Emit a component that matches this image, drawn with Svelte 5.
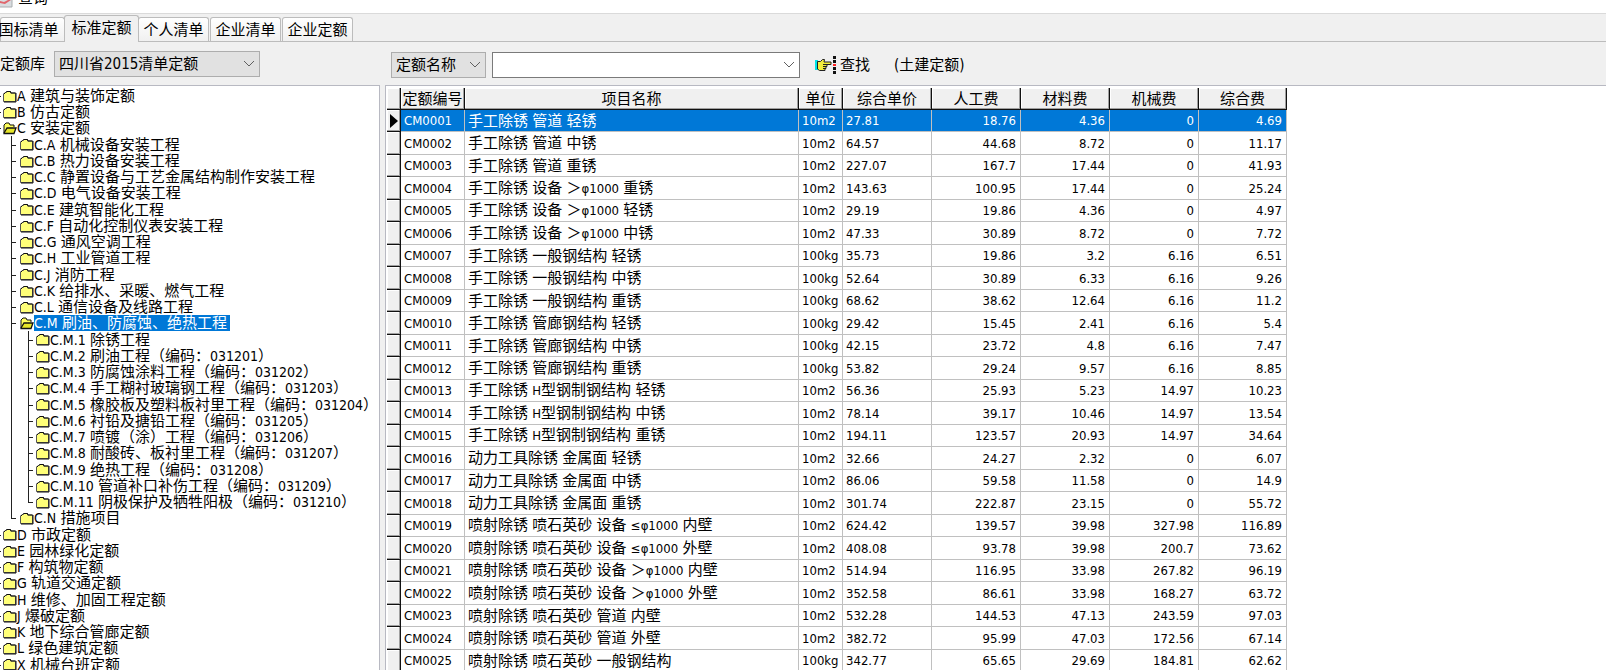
<script lang="ts">
  const tabs = ['国标清单', '标准定额', '个人清单', '企业清单', '企业定额'];
  let activeTab = $state('标准定额');
  let keyword = $state('');

  type Node = { level: number; code: string; name: string; open?: boolean };

  let selectedNode = $state('C.M');
  const nodes: Node[] = [
    { level: 0, code: 'A', name: '建筑与装饰定额' },
    { level: 0, code: 'B', name: '仿古定额' },
    { level: 0, code: 'C', name: '安装定额', open: true },
    { level: 1, code: 'C.A', name: '机械设备安装工程' },
    { level: 1, code: 'C.B', name: '热力设备安装工程' },
    { level: 1, code: 'C.C', name: '静置设备与工艺金属结构制作安装工程' },
    { level: 1, code: 'C.D', name: '电气设备安装工程' },
    { level: 1, code: 'C.E', name: '建筑智能化工程' },
    { level: 1, code: 'C.F', name: '自动化控制仪表安装工程' },
    { level: 1, code: 'C.G', name: '通风空调工程' },
    { level: 1, code: 'C.H', name: '工业管道工程' },
    { level: 1, code: 'C.J', name: '消防工程' },
    { level: 1, code: 'C.K', name: '给排水、采暖、燃气工程' },
    { level: 1, code: 'C.L', name: '通信设备及线路工程' },
    { level: 1, code: 'C.M', name: '刷油、防腐蚀、绝热工程', open: true },
    { level: 2, code: 'C.M.1', name: '除锈工程' },
    { level: 2, code: 'C.M.2', name: '刷油工程（编码：031201）' },
    { level: 2, code: 'C.M.3', name: '防腐蚀涂料工程（编码：031202）' },
    { level: 2, code: 'C.M.4', name: '手工糊衬玻璃钢工程（编码：031203）' },
    { level: 2, code: 'C.M.5', name: '橡胶板及塑料板衬里工程（编码：031204）' },
    { level: 2, code: 'C.M.6', name: '衬铅及搪铅工程（编码：031205）' },
    { level: 2, code: 'C.M.7', name: '喷镀（涂）工程（编码：031206）' },
    { level: 2, code: 'C.M.8', name: '耐酸砖、板衬里工程（编码：031207）' },
    { level: 2, code: 'C.M.9', name: '绝热工程（编码：031208）' },
    { level: 2, code: 'C.M.10', name: '管道补口补伤工程（编码：031209）' },
    { level: 2, code: 'C.M.11', name: '阴极保护及牺牲阳极（编码：031210）' },
    { level: 1, code: 'C.N', name: '措施项目' },
    { level: 0, code: 'D', name: '市政定额' },
    { level: 0, code: 'E', name: '园林绿化定额' },
    { level: 0, code: 'F', name: '构筑物定额' },
    { level: 0, code: 'G', name: '轨道交通定额' },
    { level: 0, code: 'H', name: '维修、加固工程定额' },
    { level: 0, code: 'J', name: '爆破定额' },
    { level: 0, code: 'K', name: '地下综合管廊定额' },
    { level: 0, code: 'L', name: '绿色建筑定额' },
    { level: 0, code: 'X', name: '机械台班定额' }
  ];

  // the vertical guide at `level` goes on below row i
  function continues(i: number, level: number) {
    for (let j = i + 1; j < nodes.length; j++) {
      if (nodes[j].level < level) return false;
      if (nodes[j].level === level) return true;
    }
    return false;
  }

  // split into latin and cjk runs, latin is set smaller
  function runs(text: string) {
    return text.split(/([\x21-\x7eφ≤]+)/).filter(Boolean)
      .map((t) => ({ t, latin: /^[\x21-\x7eφ≤]/.test(t) }));
  }

  const columns = ['定额编号', '项目名称', '单位', '综合单价', '人工费', '材料费', '机械费', '综合费'];
  let current = $state(0);
  const rows = [
    ['CM0001', '手工除锈 管道 轻锈', '10m2', '27.81', '18.76', '4.36', '0', '4.69'],
    ['CM0002', '手工除锈 管道 中锈', '10m2', '64.57', '44.68', '8.72', '0', '11.17'],
    ['CM0003', '手工除锈 管道 重锈', '10m2', '227.07', '167.7', '17.44', '0', '41.93'],
    ['CM0004', '手工除锈 设备 ＞φ1000 重锈', '10m2', '143.63', '100.95', '17.44', '0', '25.24'],
    ['CM0005', '手工除锈 设备 ＞φ1000 轻锈', '10m2', '29.19', '19.86', '4.36', '0', '4.97'],
    ['CM0006', '手工除锈 设备 ＞φ1000 中锈', '10m2', '47.33', '30.89', '8.72', '0', '7.72'],
    ['CM0007', '手工除锈 一般钢结构 轻锈', '100kg', '35.73', '19.86', '3.2', '6.16', '6.51'],
    ['CM0008', '手工除锈 一般钢结构 中锈', '100kg', '52.64', '30.89', '6.33', '6.16', '9.26'],
    ['CM0009', '手工除锈 一般钢结构 重锈', '100kg', '68.62', '38.62', '12.64', '6.16', '11.2'],
    ['CM0010', '手工除锈 管廊钢结构 轻锈', '100kg', '29.42', '15.45', '2.41', '6.16', '5.4'],
    ['CM0011', '手工除锈 管廊钢结构 中锈', '100kg', '42.15', '23.72', '4.8', '6.16', '7.47'],
    ['CM0012', '手工除锈 管廊钢结构 重锈', '100kg', '53.82', '29.24', '9.57', '6.16', '8.85'],
    ['CM0013', '手工除锈 H型钢制钢结构 轻锈', '10m2', '56.36', '25.93', '5.23', '14.97', '10.23'],
    ['CM0014', '手工除锈 H型钢制钢结构 中锈', '10m2', '78.14', '39.17', '10.46', '14.97', '13.54'],
    ['CM0015', '手工除锈 H型钢制钢结构 重锈', '10m2', '194.11', '123.57', '20.93', '14.97', '34.64'],
    ['CM0016', '动力工具除锈 金属面 轻锈', '10m2', '32.66', '24.27', '2.32', '0', '6.07'],
    ['CM0017', '动力工具除锈 金属面 中锈', '10m2', '86.06', '59.58', '11.58', '0', '14.9'],
    ['CM0018', '动力工具除锈 金属面 重锈', '10m2', '301.74', '222.87', '23.15', '0', '55.72'],
    ['CM0019', '喷射除锈 喷石英砂 设备 ≤φ1000 内壁', '10m2', '624.42', '139.57', '39.98', '327.98', '116.89'],
    ['CM0020', '喷射除锈 喷石英砂 设备 ≤φ1000 外壁', '10m2', '408.08', '93.78', '39.98', '200.7', '73.62'],
    ['CM0021', '喷射除锈 喷石英砂 设备 ＞φ1000 内壁', '10m2', '514.94', '116.95', '33.98', '267.82', '96.19'],
    ['CM0022', '喷射除锈 喷石英砂 设备 ＞φ1000 外壁', '10m2', '352.58', '86.61', '33.98', '168.27', '63.72'],
    ['CM0023', '喷射除锈 喷石英砂 管道 内壁', '10m2', '532.28', '144.53', '47.13', '243.59', '97.03'],
    ['CM0024', '喷射除锈 喷石英砂 管道 外壁', '10m2', '382.72', '95.99', '47.03', '172.56', '67.14'],
    ['CM0025', '喷射除锈 喷石英砂 一般钢结构', '100kg', '342.77', '65.65', '29.69', '184.81', '62.62']
  ];
</script>

<div class="window">
  <header class="title">
    <svg width="13" height="8" viewBox="0 0 13 8">
      <path d="M0 0H12V7H0Z" fill="#d9dde0" />
      <path d="M0 1 4 2 8 0H11L5 4 0 3Z" fill="#e0656c" />
      <path d="M0 7H12V0" fill="none" stroke="#a9adb0" />
    </svg>
    <span>查询</span>
  </header>

  <nav class="tabs">
    {#each tabs as tab}
      <button class:active={tab === activeTab} onclick={() => (activeTab = tab)}>{tab}</button>
    {/each}
  </nav>

  <div class="toolbar">
    <div class="library">
      <label for="library">定额库</label>
      <span class="combo">
        <select id="library">
          <option>四川省2015清单定额</option>
        </select>
        <svg class="chevron" width="12" height="8" viewBox="0 0 12 8"><path d="M1 1 6 6 11 1" /></svg>
      </span>
    </div>
    <div class="search">
      <span class="combo field">
        <select aria-label="查找字段">
          <option>定额名称</option>
        </select>
        <svg class="chevron" width="12" height="8" viewBox="0 0 12 8"><path d="M1 1 6 6 11 1" /></svg>
      </span>
      <span class="combo keyword">
        <input type="text" aria-label="关键字" bind:value={keyword} />
        <svg class="chevron" width="12" height="8" viewBox="0 0 12 8"><path d="M1 1 6 6 11 1" /></svg>
      </span>
      <button class="find">
        <svg width="22" height="18" viewBox="0 0 22 18">
          <path d="M0 4H3V14H0Z" fill="#00e5e5" />
          <path d="M2.500 5.500H5.500L7.500 3.500H9.500L9 6H16V8.500H12V10.500H11V12.500H10V14.500H4.500L2.500 13Z" fill="#f4ee3c" stroke="#222" />
          <path d="M8 8.500H12M8 10.500H11M8 12.500H10" stroke="#222" />
          <path d="M18 0H21V3H18ZM18 4H21V7H18ZM18 11H21V14H18ZM18 15H21V18H18Z" fill="#111" />
          <path d="M18 8H21V10H18Z" fill="#f22" />
        </svg>
        查找
      </button>
      <span>(土建定额)</span>
    </div>
  </div>

  <main>
    <ul class="tree">
      {#each nodes as node, i}
        <li>
          {#each Array(node.level + 1) as _, l}
            <i class:root={l === 0} class:line={l > 0 && (l === node.level || continues(i, l))}
              class:branch={l === node.level} class:last={l === node.level && !continues(i, l)}></i>
          {/each}
          <svg width="14" height="13" viewBox="0 0 14 13">
            {#if node.open}
              <path d="M1 11V3L3 1H6L7 3H11V5" fill="#ffff5a" stroke="#111" />
              <path d="M1 11 4 6H13L11 11.500H1Z" fill="#e6e628" stroke="#111" stroke-width="1.300" />
            {:else}
              <path d="M.5 11.500V4L2 2.500H3.500V1.500H7.500V3H12.500V11.500Z" fill="#ffff78" stroke="#555" />
              <path d="M1 4 2.500 2.500M3.500 1.500H7.500L8 3H12.500M13 3V12H1" fill="none" stroke="#111" />
            {/if}
          </svg>
          <button class:selected={node.code === selectedNode} onclick={() => (selectedNode = node.code)}>
            <b>{node.code}</b>
            {#each runs(node.name) as run}<span class:latin={run.latin}>{run.t}</span>{/each}
          </button>
        </li>
      {/each}
    </ul>

    <div class="grid">
      <table>
        <colgroup>
          <col class="mark" /><col class="code" /><col class="name" /><col class="unit" />
          <col class="price" /><col class="price" /><col class="price" /><col class="price" /><col class="total" />
        </colgroup>
        <thead>
          <tr>
            <th></th>
            {#each columns as column}
              <th>{column}</th>
            {/each}
          </tr>
        </thead>
        <tbody>
          {#each rows as row, r}
            <tr class:current={r === current} onclick={() => (current = r)}>
              <th>
                {#if r === current}
                  <svg width="8" height="14" viewBox="0 0 8 14"><path d="M0 0 8 7 0 14Z" /></svg>
                {/if}
              </th>
              {#each row as cell, c}
                <td class:num={c > 3}>{#each runs(cell) as run}<span class:latin={run.latin}>{run.t}</span>{/each}</td>
              {/each}
            </tr>
          {/each}
        </tbody>
      </table>
    </div>
  </main>
</div>

<style>
  :global(body) {
    overflow: hidden;
  }
  .window {
    display: flex;
    flex-direction: column;
    height: 100vh;
    background: #f0f0f0;
    color: #000;
    font: 15px/20px 'DejaVu Sans Condensed', 'Noto Sans CJK SC', sans-serif;
  }
  button, select, input {
    font: inherit;
    color: inherit;
    margin: 0;
    box-sizing: border-box;
  }
  button {
    padding: 0;
    border: 0;
    background: none;
    white-space: nowrap;
  }
  .title {
    display: flex;
    align-items: flex-end;
    gap: 5px;
    height: 14px;
    box-sizing: border-box;
    overflow: hidden;
    background: #fff;
    border-bottom: 1px solid #dadada;
  }
  .title svg {
    align-self: flex-start;
  }
  .title span {
    margin-bottom: 5px;
  }

  .tabs {
    display: flex;
    align-items: flex-end;
    gap: 1px;
    height: 28px;
    box-sizing: border-box;
    border-bottom: 1px solid #bcbcbc;
  }
  .tabs button {
    width: 71px;
    height: 24px;
    border: 1px solid #bcbcbc;
    border-bottom: 0;
    border-radius: 3px 3px 0 0;
    background: linear-gradient(#fff, #f0f0f0);
  }
  .tabs button:first-child {
    width: 65px;
    margin-right: -2px;
    text-indent: -8px;
  }
  .tabs .active {
    width: 75px;
    height: 27px;
    margin: 0 -2px -1px 0;
    padding-bottom: 3px;
    background: #f0f0f0;
  }

  .toolbar {
    display: flex;
    align-items: center;
    height: 43px;
    padding-top: 2px;
    box-sizing: border-box;
  }
  .library {
    display: flex;
    align-items: center;
    gap: 9px;
    width: 391px;
    margin-bottom: 2px;
  }
  .search {
    display: flex;
    align-items: center;
    gap: 6px;
  }
  .combo {
    display: grid;
    align-items: center;
    width: 206px;
    height: 26px;
  }
  .combo > * {
    grid-area: 1 / 1;
  }
  .field {
    width: 95px;
  }
  .keyword {
    width: 308px;
  }
  select, input {
    appearance: none;
    width: 100%;
    height: 100%;
    padding: 0 4px;
    border: 1px solid #adadad;
    border-radius: 0;
    background: #e1e1e1;
    outline: none;
  }
  input {
    border-color: #7a7a7a;
    background: #fff;
  }
  .chevron {
    justify-self: end;
    margin-right: 5px;
    fill: none;
    stroke: #606060;
    pointer-events: none;
  }
  .find {
    display: flex;
    align-items: center;
    gap: 3px;
    margin: 0 18px 0 9px;
  }

  main {
    display: flex;
    flex: 1;
    gap: 5px;
    min-height: 0;
  }
  .tree {
    flex: 0 0 380px;
    box-sizing: border-box;
    margin: 0;
    padding: 2px 0 0;
    list-style: none;
    overflow: hidden;
    background: #fff;
    border: 1px solid #b8b9c2;
    border-width: 1px 1px 0 0;
  }
  li {
    display: flex;
    align-items: center;
    height: 16px;
  }
  li:nth-child(4n) {
    height: 17px;
  }
  li svg {
    flex: none;
  }
  li button {
    height: 16px;
    padding-right: 3px;
    line-height: 16px;
  }
  li b, li .latin {
    font-size: 14px;
    font-weight: normal;
  }
  .selected {
    background: #0078d7;
    color: #fff;
  }

  /* guide lines: one box per level */
  i {
    position: relative;
    flex: none;
    width: 8px;
    height: 100%;
    margin-left: 8px;
  }
  i.root {
    width: 3px;
    margin-left: 0;
  }
  .root + i {
    width: 9px;
  }
  .line::before {
    content: '';
    position: absolute;
    inset: 0 auto 0 0;
    border-left: 1px solid #222;
  }
  .last::before {
    bottom: 50%;
  }
  .branch::after {
    content: '';
    position: absolute;
    top: 50%;
    left: 0;
    width: 5px;
    border-top: 1px solid #222;
  }
  .root.branch::after {
    width: 1px;
  }

  .grid {
    flex: 1;
    min-width: 0;
    overflow: hidden;
    padding: 2px 0 0 1px;
    background: #fff;
    border: 1px solid #b8b9c2;
    border-width: 1px 0 0 1px;
  }
  table {
    width: 900px;
    table-layout: fixed;
    border-collapse: separate;
    border-spacing: 0;
  }
  .mark { width: 14px; }
  .code { width: 64px; }
  .name { width: 334px; }
  .unit { width: 44px; }
  .price { width: 89px; }
  .total { width: 88px; }
  tr {
    height: 22px;
  }
  tbody tr:nth-child(even) {
    height: 23px;
  }
  th, td {
    box-sizing: border-box;
    padding: 0;
    line-height: 20px;
    white-space: nowrap;
    overflow: hidden;
  }
  th {
    background: #f0f0f0;
    font-weight: normal;
    border: 1px solid #111;
    border-width: 0 1px 1px 0;
    box-shadow: inset -1px -1px #a0a0a0, inset 1px 1px #fff;
  }
  td {
    padding: 0 3px;
    border: 1px solid #c0c0c0;
    border-width: 0 1px 1px 0;
  }
  td .latin {
    font-size: 13px;
  }
  .num {
    padding-right: 4px;
    text-align: right;
  }
  .current td {
    background: #0078d7;
    color: #fff;
  }
  th svg {
    display: block;
    margin-left: 3px;
  }
</style>
